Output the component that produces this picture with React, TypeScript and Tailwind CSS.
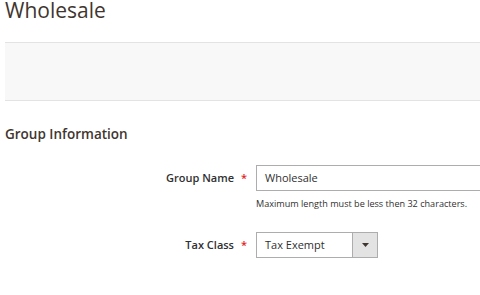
export default function App() {
  return (
    <div className="w-[480px] h-[295px] overflow-hidden bg-white font-['Open_Sans',sans-serif] text-[#303030]">
      <h1 className="pl-[5px] pt-[1px] text-[21px] font-normal leading-[18px] text-[#41362f]">Wholesale</h1>
      <div className="ml-[5px] mt-[23px] h-[59px] border-y border-[#e3e3e3] bg-[#f8f8f8]" />
      <div className="pl-[5px] mt-[23px] text-[13.5px] font-semibold leading-[20px] text-[#41362f]">Group Information</div>
      <div className="mt-[21px] flex items-start">
        <div className="w-[256px] shrink-0 h-[26px] flex items-center justify-end pr-[9px]">
          <span className="text-[11px] font-semibold">Group Name</span>
          <span className="ml-[7px] text-[11px] font-semibold text-[#e22626]">*</span>
        </div>
        <div className="flex flex-col shrink-0">
          <div className="w-[260px] h-[26px] border border-[#adadad] bg-white flex items-center pl-[8px] text-[11px]">Wholesale</div>
          <div className="mt-[7px] text-[9.1px] leading-[12px]">Maximum length must be less then 32 characters.</div>
        </div>
      </div>
      <div className="mt-[22px] flex items-start">
        <div className="w-[256px] shrink-0 h-[26px] flex items-center justify-end pr-[9px]">
          <span className="text-[11px] font-semibold">Tax Class</span>
          <span className="ml-[7px] text-[11px] font-semibold text-[#e22626]">*</span>
        </div>
        <div className="w-[122px] shrink-0 h-[26px] border border-[#adadad] bg-white flex">
          <div className="flex-1 flex items-center pl-[8px] text-[11px]">Tax Exempt</div>
          <div className="w-[25px] border-l border-[#adadad] bg-[#e3e3e3] flex items-center justify-center">
            <svg width="7" height="4" viewBox="0 0 7 4"><path d="M0 0h7L3.5 4z" fill="#41362f" /></svg>
          </div>
        </div>
      </div>
    </div>
  );
}
